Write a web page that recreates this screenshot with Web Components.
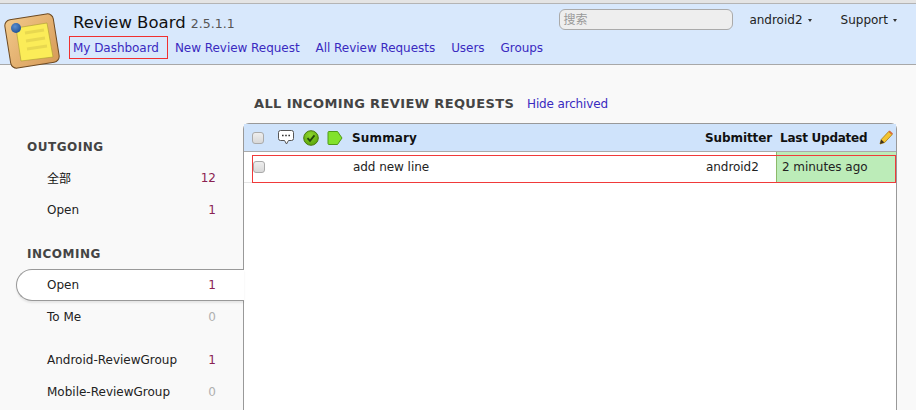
<!DOCTYPE html>
<html>
<head>
<meta charset="utf-8">
<title>Review Board</title>
<style>
  html, body { margin: 0; height: 100%; overflow: hidden; }
  body {
    background: #f9f9f9;
    color: #111;
    font: 12px "DejaVu Sans", "Noto Sans CJK SC", sans-serif;
  }
  rb-page { height: 410px; }
</style>
</head>
<body>
<rb-page>
  <rb-header slot="header"></rb-header>
  <rb-sidebar slot="sidebar">
    <rb-side-label>OUTGOING</rb-side-label>
    <rb-side-item count="12" tone="hot" cjk>全部</rb-side-item>
    <rb-side-item count="1" tone="hot">Open</rb-side-item>
    <rb-side-label second>INCOMING</rb-side-label>
    <rb-side-item count="1" tone="hot" active>Open</rb-side-item>
    <rb-side-item count="0">To Me</rb-side-item>
    <rb-side-item count="1" tone="hot" group>Android-ReviewGroup</rb-side-item>
    <rb-side-item count="0">Mobile-ReviewGroup</rb-side-item>
  </rb-sidebar>
  <rb-datagrid slot="main"></rb-datagrid>
</rb-page>

<script>
function define(name, html) {
  customElements.define(name, class extends HTMLElement {
    connectedCallback() {
      if (this.shadowRoot) return;
      this.attachShadow({ mode: 'open' });
      this.shadowRoot.innerHTML = typeof html === 'function' ? html(this) : html;
    }
  });
}

define('rb-page', `
  <style>
    :host { display: flex; flex-direction: column; }
    .body { display: flex; flex: 1; min-height: 0; }
  </style>
  <slot name="header"></slot>
  <div class="body">
    <slot name="sidebar"></slot>
    <slot name="main"></slot>
  </div>
`);

define('rb-header', `
  <style>
    :host {
      display: flex;
      height: 60px;
      margin-top: 3px;
      background: #d8e8fc;
      border-top: 1px solid #b4b4b4;
      border-bottom: 1px solid #a8a8a8;
      box-shadow: 0 -3px 0 #e4e4e4;
      box-sizing: content-box;
    }
    .logo { flex: none; width: 73px; }
    .logo svg { display: block; margin: 7px 0 0 4px; }
    .titles { flex: none; }
    .brand { margin: 9px 0 0 0; height: 22px; font-size: 16.5px; line-height: 19px; color: #111; white-space: nowrap; }
    .brand span { font-size: 12.5px; color: #555; }
    nav { display: flex; margin: 1px 0 0 -4px; letter-spacing: -.04px; }
    nav a { color: #3a2ac0; text-decoration: none; line-height: 20px; padding: 1px 3px 0; margin-right: 8px; border: 1px solid transparent; white-space: nowrap; }
    nav a.on { border-color: #f03030; margin-right: 3px; padding: 1px 8px 0 3px; }
    .right { flex: 1; display: flex; justify-content: flex-end; align-items: flex-start; padding: 5px 19px 0 0; }
    .search {
      width: 174px; height: 21px; box-sizing: border-box; margin-right: 16px;
      background: #eeeeee; border: 1px solid #aaa; border-radius: 6px;
      color: #999; font: 12px/18px "Noto Sans CJK SC", sans-serif; padding-left: 3px;
    }
    .menu { line-height: 20px; margin-top: 1px; color: #222; white-space: nowrap; }
    .menu + .menu { margin-left: 29px; }
    .menu i { display: inline-block; margin-left: 5px; vertical-align: 2px; border: 2px solid transparent; border-top: 3px solid #333; border-bottom: 0; }
  </style>
  <div class="logo">
    <svg width="58" height="60" viewBox="0 0 58 60">
      <defs>
        <linearGradient id="w" x1="0" y1="0" x2="1" y2="1"><stop offset="0" stop-color="#f2c98a"/><stop offset="1" stop-color="#d69a58"/></linearGradient>
        <radialGradient id="b" cx=".4" cy=".35" r=".7"><stop offset="0" stop-color="#5b8fd0"/><stop offset="1" stop-color="#1f4f94"/></radialGradient>
      </defs>
      <rect x="3.5" y="5.500" width="49" height="49" rx="6" transform="rotate(-9 28 30)" fill="url(#w)" stroke="#6e4a22" stroke-width="1"/>
      <polygon points="12,17 43,12 49,46 17,50" fill="#fbec58" stroke="#a89a30" stroke-width=".6"/>
      <g stroke="#e8d850" stroke-width="3">
        <line x1="21" y1="22" x2="40" y2="19"/>
        <line x1="22" y1="30" x2="41" y2="27"/>
        <line x1="23" y1="38" x2="43" y2="35"/>
      </g>
      <circle cx="12" cy="17" r="5" fill="url(#b)"/>
    </svg>
  </div>
  <div class="titles">
    <div class="brand">Review Board <span>2.5.1.1</span></div>
    <nav>
      <a class="on">My Dashboard</a>
      <a>New Review Request</a>
      <a>All Review Requests</a>
      <a>Users</a>
      <a>Groups</a>
    </nav>
  </div>
  <div class="right">
    <div class="search">搜索</div>
    <div class="menu">android2<i></i></div>
    <div class="menu">Support<i></i></div>
  </div>
`);

define('rb-sidebar', `
  <style>
    :host { display: block; flex: none; width: 244px; box-sizing: border-box; padding-top: 72px; position: relative; z-index: 1; }
  </style>
  <slot></slot>
`);

define('rb-side-label', el => `
  <style>
    :host {
      display: block; height: 20px; line-height: 20px;
      margin: ${el.hasAttribute('second') ? '18px' : '0'} 0 5px 27px;
      font-weight: bold; font-size: 12px; letter-spacing: .5px; color: #444;
    }
  </style>
  <slot></slot>
`);

define('rb-side-item', el => {
  const active = el.hasAttribute('active');
  const tone = el.getAttribute('tone') === 'hot' ? '#8b2252' : '#b0b0b0';
  return `
  <style>
    :host {
      display: flex; justify-content: space-between; align-items: center;
      height: 32px; box-sizing: border-box;
      margin-left: 16px; padding: 0 28px 0 31px;
      color: #222;
      ${el.hasAttribute('group') ? 'margin-top: 11px;' : ''}
      ${active ? `background: #fff; border: 1px solid #999; border-right: 0;
        border-radius: 16px 0 0 16px; padding-left: 30px; box-shadow: 0 2px 2px rgba(0,0,0,.08);` : ''}
    }
    .n { color: ${tone}; }
    ${el.hasAttribute('cjk') ? '.l { font-family: "Noto Sans CJK SC", sans-serif; color: #111; font-size: 12px; margin-bottom: 2px; }' : ''}
  </style>
  <span class="l"><slot></slot></span><span class="n">${el.getAttribute('count')}</span>`;
});

define('rb-checkbox', `
  <style>
    :host {
      display: block; width: 12px; height: 12px; box-sizing: border-box;
      background: linear-gradient(#eee, #d8d8d8);
      border: 1px solid #aaa; border-radius: 3px;
    }
  </style>
`);

define('rb-datagrid', `
  <style>
    :host { display: flex; flex-direction: column; flex: none; width: 654px; box-sizing: border-box; margin-left: -1px; }
    h1 { margin: 0; height: 58px; box-sizing: border-box; padding: 30px 0 0 11px; font-size: 12px; line-height: 18px; font-weight: normal; white-space: nowrap; }
    h1 b { font-size: 13px; letter-spacing: .37px; color: #444; margin-right: 9px; }
    h1 a { color: #3a2ac0; letter-spacing: -.15px; }
    .grid { flex: 1; background: #fff; border: 1px solid #999; border-bottom: 0; border-radius: 6px 6px 0 0; }
    .head { display: flex; align-items: center; height: 27px; background: #cfe3fb; border-bottom: 1px solid #aaa; font-weight: bold; color: #111; font-size: 12px; }
    .head rb-checkbox { margin-left: 8px; }
    .head svg { flex: none; display: block; }
    .sum { margin-left: 9px; flex: 1; letter-spacing: .15px; }
    .sub { width: 75px; white-space: nowrap; letter-spacing: -.1px; }
    .upd { width: 99px; white-space: nowrap; letter-spacing: -.25px; }
    .pencil { margin-right: 2px; }
    .row { height: 31px; position: relative; display: flex; border-bottom: 1px solid #e4e4e4; box-sizing: border-box; color: #222; }
    .row > * { line-height: 30px; }
    .row rb-checkbox { margin: 9px 0 0 9px; }
    .t { margin-left: 88px; flex: 1; letter-spacing: -.05px; }
    .s { width: 70px; letter-spacing: -.05px; }
    .u { width: 120px; box-sizing: border-box; padding-left: 5px; background: #bcecb8; border-left: 1px solid #8cba6a; letter-spacing: -.05px; }
    .outline { position: absolute; left: 8px; right: 0; top: 3px; height: 28px; border: 1px solid #f03a3a; box-sizing: border-box; }
  </style>
  <h1><b>ALL INCOMING REVIEW REQUESTS</b> <a>Hide archived</a></h1>
  <div class="grid">
    <div class="head">
      <rb-checkbox></rb-checkbox>
      <svg style="margin-left:13px" width="18" height="17" viewBox="0 0 18 17">
        <path d="M3.500 1.500h11a2 2 0 0 1 2 2v6a2 2 0 0 1-2 2h-3l-2 3.500-2-3.500h-4a2 2 0 0 1-2-2v-6a2 2 0 0 1 2-2z" fill="#fff" stroke="#555"/>
        <path d="M5 6.500h1.600M8.200 6.500h1.600M11.400 6.500h1.600" stroke="#333" stroke-width="1.600"/>
      </svg>
      <svg style="margin-left:8px" width="16" height="16" viewBox="0 0 16 16">
        <defs><radialGradient id="g" cx=".45" cy=".3" r=".75"><stop offset="0" stop-color="#8ed62e"/><stop offset="1" stop-color="#58a408"/></radialGradient></defs>
        <circle cx="8" cy="8" r="7.300" fill="url(#g)" stroke="#4a7a10"/>
        <path d="M4.500 8.200l2.500 2.600 4.500-5.400" fill="none" stroke="#24480a" stroke-width="1.800"/>
      </svg>
      <svg style="margin-left:8px" width="16" height="14" viewBox="0 0 16 14">
        <path d="M1 1.500a1 1 0 0 1 1-1h8.500l4.500 6.500-4.500 6.500H2a1 1 0 0 1-1-1z" fill="#82e22c" stroke="#4f9a18"/>
      </svg>
      <div class="sum">Summary</div>
      <div class="sub">Submitter</div>
      <div class="upd">Last Updated</div>
      <svg class="pencil" width="15" height="15" viewBox="0 0 15 15">
        <path d="M1 14l1.200-4.500 7.500-8 3.500 3-7.500 8z" fill="#f3c430" stroke="#a87a10" stroke-width=".8"/>
        <path d="M9.500 1.700l3.500 3 1-1.200-3.300-3z" fill="#d96c3c"/>
        <path d="M1 14l1.200-4.500 3.200 3z" fill="#3d3320"/>
      </svg>
    </div>
    <div class="row">
      <rb-checkbox></rb-checkbox>
      <div class="t">add new line</div>
      <div class="s">android2</div>
      <div class="u">2 minutes ago</div>
      <div class="outline"></div>
    </div>
  </div>
`);
</script>
</body>
</html>
